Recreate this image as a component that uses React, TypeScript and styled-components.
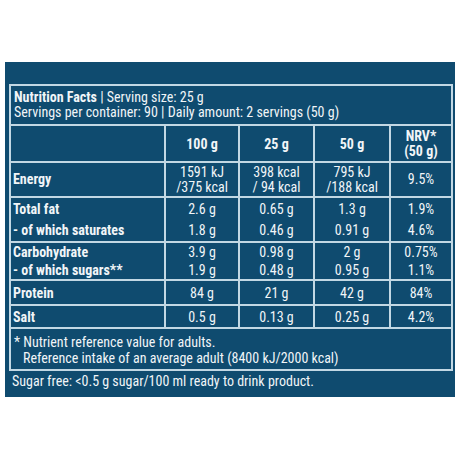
import React from "react";
import styled, { createGlobalStyle } from "styled-components";

const LINE = "#c2d8e4";
const BLUE = "#0f4b6f";
const INK = "#f1f5f8";

const GlobalStyle = createGlobalStyle`
  html, body {
    margin: 0;
    padding: 0;
    background: #ffffff;
  }
  body {
    font-family: "Roboto Condensed", Roboto, "Liberation Sans", sans-serif;
  }
`;

type Row = {
  label: string[];
  cols: string[][];
  h: number;
  lh: number;
};

const rows: Row[] = [
  {
    label: ["Energy"],
    cols: [["1591 kJ", "/375 kcal"], ["398 kcal", "/ 94 kcal"], ["795 kJ", "/188 kcal"], ["9.5%"]],
    h: 33,
    lh: 15,
  },
  {
    label: ["Total fat", "- of which saturates"],
    cols: [["2.6 g", "1.8 g"], ["0.65 g", "0.46 g"], ["1.3 g", "0.91 g"], ["1.9%", "4.6%"]],
    h: 43,
    lh: 21,
  },
  {
    label: ["Carbohydrate", "- of which sugars**"],
    cols: [["3.9 g", "1.9 g"], ["0.98 g", "0.48 g"], ["2 g", "0.95 g"], ["0.75%", "1.1%"]],
    h: 36,
    lh: 18,
  },
  {
    label: ["Protein"],
    cols: [["84 g"], ["21 g"], ["42 g"], ["84%"]],
    h: 23,
    lh: 16,
  },
  {
    label: ["Salt"],
    cols: [["0.5 g"], ["0.13 g"], ["0.25 g"], ["4.2%"]],
    h: 21,
    lh: 16,
  },
];

export default function App() {
  return (
    <>
      <GlobalStyle />
      <Panel>
        <Box>
          <Title>
            <div>
              <b>Nutrition Facts</b> | Serving size: 25 g
            </div>
            <div>Servings per container: 90 | Daily amount: 2 servings (50 g)</div>
          </Title>
          <Grid $h={35}>
            <Cell />
            <HeadCell>100 g</HeadCell>
            <HeadCell>25 g</HeadCell>
            <HeadCell>50 g</HeadCell>
            <HeadCell $lh={15}>
              NRV*
              <br />
              (50 g)
            </HeadCell>
          </Grid>
          {rows.map((r) => (
            <Grid $h={r.h} key={r.label[0]}>
              <LabelCell $lh={r.lh}>
                {r.label.map((l) => (
                  <div key={l}>{l}</div>
                ))}
              </LabelCell>
              {r.cols.map((c, i) => (
                <Cell $lh={r.lh} key={i}>
                  {c.map((v) => (
                    <div key={v}>{v}</div>
                  ))}
                </Cell>
              ))}
            </Grid>
          ))}
          <Note>
            <div>* Nutrient reference value for adults.</div>
            <Indent>Reference intake of an average adult (8400 kJ/2000 kcal)</Indent>
          </Note>
        </Box>
        <Footer>Sugar free: &lt;0.5 g sugar/100 ml ready to drink product.</Footer>
      </Panel>
    </>
  );
}

const Panel = styled.div`
  box-sizing: border-box;
  margin: 62px 0 0 5px;
  width: 450px;
  height: 335px;
  padding: 22px 2px 0 4px;
  background: ${BLUE};
  color: ${INK};
  font-size: 14px;
`;

const Box = styled.div`
  border: 2px solid ${LINE};
  background: ${LINE};
  display: flex;
  flex-direction: column;
  gap: 2px;
`;

const Title = styled.div`
  background: ${BLUE};
  height: 38px;
  box-sizing: border-box;
  padding: 4px 3px 0;
  line-height: 15px;

  b {
    font-weight: 700;
  }
`;

const Grid = styled.div<{ $h: number }>`
  display: grid;
  grid-template-columns: 153px 72px 73px 74px 1fr;
  grid-template-rows: ${(p) => p.$h}px;
  gap: 2px;
`;

const Cell = styled.div<{ $lh?: number }>`
  background: ${BLUE};
  display: flex;
  flex-direction: column;
  justify-content: center;
  align-items: center;
  line-height: ${(p) => p.$lh ?? 16}px;
  white-space: nowrap;
  overflow: hidden;
`;

const HeadCell = styled(Cell)`
  font-weight: 700;
  text-align: center;
`;

const LabelCell = styled(Cell)`
  align-items: flex-start;
  padding-left: 2px;
  font-weight: 700;
`;

const Note = styled.div`
  background: ${BLUE};
  height: 40px;
  box-sizing: border-box;
  padding: 5px 3px 0;
  line-height: 16px;
`;

const Indent = styled.div`
  padding-left: 9px;
`;

const Footer = styled.div`
  padding: 2px 0 0 3px;
  line-height: 16px;
`;
